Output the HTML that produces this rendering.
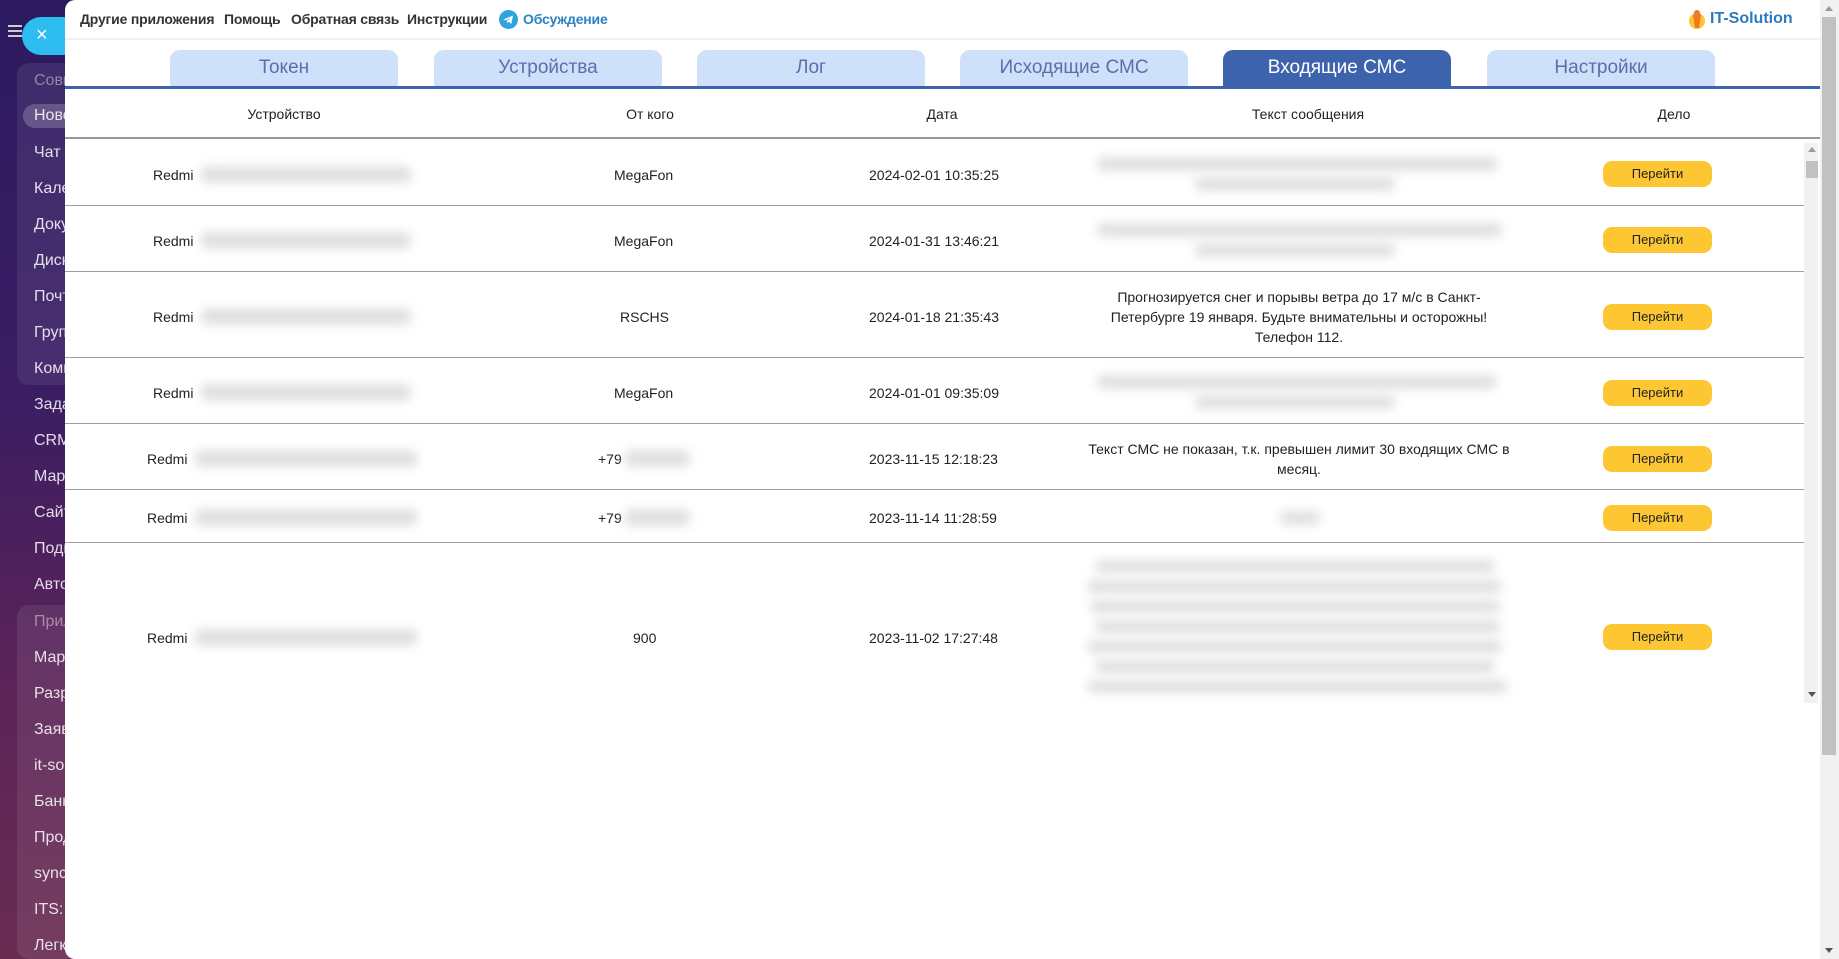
<!DOCTYPE html>
<html><head><meta charset="utf-8"><style>
*{margin:0;padding:0;box-sizing:border-box}
body{width:1839px;height:959px;overflow:hidden;position:relative;font-family:"Liberation Sans",Arial,sans-serif;background:#2e1a55}
#side{position:absolute;left:0;top:0;width:80px;height:959px;background:linear-gradient(180deg,#2b1a5e 0%,#3a1d63 40%,#5a2358 70%,#6a2d52 100%)}
.si{position:absolute;left:34px;color:rgba(255,255,255,.85);font-size:16px;white-space:nowrap}
.grp{position:absolute;left:17px;width:60px;background:rgba(255,255,255,.08);border-radius:12px}
#modal{position:absolute;left:65px;top:0;width:1755px;height:959px;background:#fff;border-radius:10px 0 0 10px;overflow:hidden}
.top a{position:absolute;top:11px;font-size:14px;color:#333;font-weight:bold;text-decoration:none;letter-spacing:-.2px}
.tab{position:absolute;top:50px;height:36px;width:228px;background:#cfe0fb;border-radius:10px 10px 0 0;color:#5b6fa8;font-size:19px;text-align:center;line-height:36px}
.tab.on{background:#3d63ad;color:#fff}
.th{position:absolute;top:106px;font-size:14px;color:#222;transform:translateX(-50%)}
.c{position:absolute;font-size:14px;color:#222;white-space:nowrap}
.blur{position:absolute;background:#e0e0e0;filter:blur(5px);border-radius:6px}
.btn{position:absolute;left:1538px;width:109px;height:26px;background:#fdc734;border-radius:9px;font-size:13px;color:#222;text-align:center;line-height:26px}
.hl{position:absolute;left:0;width:1739px;height:1px;background:#a0a0a0}
.msg{position:absolute;left:1020px;width:428px;text-align:center;font-size:14px;line-height:20px;color:#222}
</style></head><body>
<div id="side">
<div style="position:absolute;left:8px;top:25px;width:14px;height:2px;background:#ccc;box-shadow:0 5px 0 #ccc,0 10px 0 #ccc"></div>
<div style="position:absolute;left:22px;top:17px;width:60px;height:38px;background:#2ebdf0;border-radius:19px;color:#fff;font-size:20px;line-height:36px;padding-left:14px">×</div>
<div class="grp" style="top:63px;height:322px"></div>
<div class="grp" style="top:605px;height:354px"></div>
<div style="position:absolute;left:23px;top:104px;width:60px;height:24px;background:rgba(255,255,255,.2);border-radius:12px"></div>
<div class="si" style="top:72px;opacity:.5">Совм</div>
<div class="si" style="top:107px">Ново</div>
<div class="si" style="top:144px">Чат и</div>
<div class="si" style="top:180px">Кале</div>
<div class="si" style="top:216px">Доку</div>
<div class="si" style="top:252px">Диск</div>
<div class="si" style="top:288px">Почт</div>
<div class="si" style="top:324px">Груп</div>
<div class="si" style="top:360px">Комм</div>
<div class="si" style="top:396px">Зада</div>
<div class="si" style="top:432px">CRM</div>
<div class="si" style="top:468px">Мар</div>
<div class="si" style="top:504px">Сайт</div>
<div class="si" style="top:540px">Подп</div>
<div class="si" style="top:576px">Авто</div>
<div class="si" style="top:613px;opacity:.5">Прил</div>
<div class="si" style="top:649px">Мар</div>
<div class="si" style="top:685px">Разр</div>
<div class="si" style="top:721px">Заяв</div>
<div class="si" style="top:757px">it-so</div>
<div class="si" style="top:793px">Банк</div>
<div class="si" style="top:829px">Прод</div>
<div class="si" style="top:865px">sync</div>
<div class="si" style="top:901px">ITS: С</div>
<div class="si" style="top:937px">Легк</div>
</div>
<div id="modal">
<div class="top">
<a style="left:15px">Другие приложения</a>
<a style="left:159px">Помощь</a>
<a style="left:226px">Обратная связь</a>
<a style="left:342px">Инструкции</a>
<div style="position:absolute;left:434px;top:10px;width:19px;height:19px;border-radius:50%;background:#2ea3e0"><svg width="19" height="19" viewBox="0 0 19 19"><path d="M4.5 9.5 L14 5.5 L12.3 14 L9.5 11.8 L8 13.3 L8 11 L12 7.2 L7 10.5 Z" fill="#fff"/></svg></div>
<a style="left:458px;color:#2a83c4">Обсуждение</a>
<svg style="position:absolute;left:1622px;top:9px" width="20" height="22" viewBox="0 0 20 22"><circle cx="10" cy="12" r="8" fill="#fdc734"/><path d="M6 6 Q10 2 14 6 L12 19 L8 19 Z" fill="#f07a1f"/><circle cx="10" cy="4" r="3" fill="#f07a1f"/></svg>
<div style="position:absolute;left:1645px;top:10px;font-size:16px;font-weight:bold;color:#2c7ac0">IT-Solution</div>
</div>
<div style="position:absolute;left:0;top:38px;width:1755px;height:2px;background:#eef2f6"></div>
<div class="tab" style="left:105px">Токен</div>
<div class="tab" style="left:369px">Устройства</div>
<div class="tab" style="left:632px">Лог</div>
<div class="tab" style="left:895px">Исходящие СМС</div>
<div class="tab on" style="left:1158px">Входящие СМС</div>
<div class="tab" style="left:1422px">Настройки</div>
<div style="position:absolute;left:0;top:86px;width:1755px;height:3px;background:#3d63ad"></div>
<div class="th" style="left:219px">Устройство</div>
<div class="th" style="left:585px">От кого</div>
<div class="th" style="left:877px">Дата</div>
<div class="th" style="left:1243px">Текст сообщения</div>
<div class="th" style="left:1609px">Дело</div>
<div style="position:absolute;left:0;top:137px;width:1755px;height:2px;background:#999"></div>
<div style="position:absolute;left:0;top:139px;width:1755px;height:564px;overflow:hidden">
 <div style="position:absolute;left:0;top:-139px;width:1755px;height:900px">
 <div class="c" style="left:88px;top:167px">Redmi</div><div class="blur" style="left:136px;top:166px;width:210px;height:17px"></div>
 <div class="c" style="left:549px;top:167px">MegaFon</div>
 <div class="c" style="left:804px;top:167px">2024-02-01 10:35:25</div>
 <div class="blur" style="left:1032px;top:157px;width:400px;height:14px"></div><div class="blur" style="left:1130px;top:177px;width:200px;height:14px"></div>
 <div class="btn" style="top:161px">Перейти</div>
 <div class="hl" style="top:205px"></div>
 <div class="c" style="left:88px;top:233px">Redmi</div><div class="blur" style="left:136px;top:232px;width:210px;height:17px"></div>
 <div class="c" style="left:549px;top:233px">MegaFon</div>
 <div class="c" style="left:804px;top:233px">2024-01-31 13:46:21</div>
 <div class="blur" style="left:1032px;top:223px;width:405px;height:14px"></div><div class="blur" style="left:1130px;top:243px;width:200px;height:14px"></div>
 <div class="btn" style="top:227px">Перейти</div>
 <div class="hl" style="top:271px"></div>
 <div class="c" style="left:88px;top:309px">Redmi</div><div class="blur" style="left:136px;top:308px;width:210px;height:17px"></div>
 <div class="c" style="left:555px;top:309px">RSCHS</div>
 <div class="c" style="left:804px;top:309px">2024-01-18 21:35:43</div>
 <div class="msg" style="top:287px">Прогнозируется снег и порывы ветра до 17 м/с в Санкт-Петербурге 19 января. Будьте внимательны и осторожны! Телефон 112.</div>
 <div class="btn" style="top:304px">Перейти</div>
 <div class="hl" style="top:357px"></div>
 <div class="c" style="left:88px;top:385px">Redmi</div><div class="blur" style="left:136px;top:384px;width:210px;height:17px"></div>
 <div class="c" style="left:549px;top:385px">MegaFon</div>
 <div class="c" style="left:804px;top:385px">2024-01-01 09:35:09</div>
 <div class="blur" style="left:1032px;top:375px;width:400px;height:14px"></div><div class="blur" style="left:1130px;top:395px;width:200px;height:14px"></div>
 <div class="btn" style="top:380px">Перейти</div>
 <div class="hl" style="top:423px"></div>
 <div class="c" style="left:82px;top:451px">Redmi</div><div class="blur" style="left:130px;top:450px;width:222px;height:17px"></div>
 <div class="c" style="left:533px;top:451px">+79</div><div class="blur" style="left:560px;top:450px;width:65px;height:17px"></div>
 <div class="c" style="left:804px;top:451px">2023-11-15 12:18:23</div>
 <div class="msg" style="top:439px">Текст СМС не показан, т.к. превышен лимит 30 входящих СМС в месяц.</div>
 <div class="btn" style="top:446px">Перейти</div>
 <div class="hl" style="top:489px"></div>
 <div class="c" style="left:82px;top:510px">Redmi</div><div class="blur" style="left:130px;top:509px;width:222px;height:17px"></div>
 <div class="c" style="left:533px;top:510px">+79</div><div class="blur" style="left:560px;top:509px;width:65px;height:17px"></div>
 <div class="c" style="left:804px;top:510px">2023-11-14 11:28:59</div>
 <div class="blur" style="left:1215px;top:511px;width:40px;height:14px"></div>
 <div class="btn" style="top:505px">Перейти</div>
 <div class="hl" style="top:542px"></div>
 <div class="c" style="left:82px;top:630px">Redmi</div><div class="blur" style="left:130px;top:629px;width:222px;height:17px"></div>
 <div class="c" style="left:568px;top:630px">900</div>
 <div class="c" style="left:804px;top:630px">2023-11-02 17:27:48</div>
 <div class="blur" style="left:1030px;top:560px;width:400px;height:13px"></div>
 <div class="blur" style="left:1022px;top:580px;width:415px;height:13px"></div>
 <div class="blur" style="left:1025px;top:600px;width:410px;height:13px"></div>
 <div class="blur" style="left:1030px;top:620px;width:405px;height:13px"></div>
 <div class="blur" style="left:1022px;top:640px;width:415px;height:13px"></div>
 <div class="blur" style="left:1030px;top:660px;width:400px;height:13px"></div>
 <div class="blur" style="left:1022px;top:680px;width:420px;height:13px"></div>
 <div class="btn" style="top:624px">Перейти</div>
 </div>
 <div style="position:absolute;left:1739px;top:4px;width:14px;height:560px;background:#f1f1f1"></div>
 <div style="position:absolute;left:1743px;top:8px;border:4px solid transparent;border-bottom:5px solid #999;border-top:0"></div>
 <div style="position:absolute;left:1741px;top:22px;width:12px;height:17px;background:#c1c1c1"></div>
 <div style="position:absolute;left:1743px;top:553px;border:4px solid transparent;border-top:5px solid #555;border-bottom:0"></div>
</div>
</div>
<div style="position:absolute;left:1820px;top:0;width:19px;height:959px;background:#f1f1f1"></div>
<div style="position:absolute;left:1822px;top:17px;width:14px;height:738px;background:#c1c1c1"></div>
<div style="position:absolute;left:1825px;top:6px;border:4px solid transparent;border-bottom:5px solid #999;border-top:0"></div>
<div style="position:absolute;left:1825px;top:948px;border:4px solid transparent;border-top:5px solid #555;border-bottom:0"></div>
</body></html>
